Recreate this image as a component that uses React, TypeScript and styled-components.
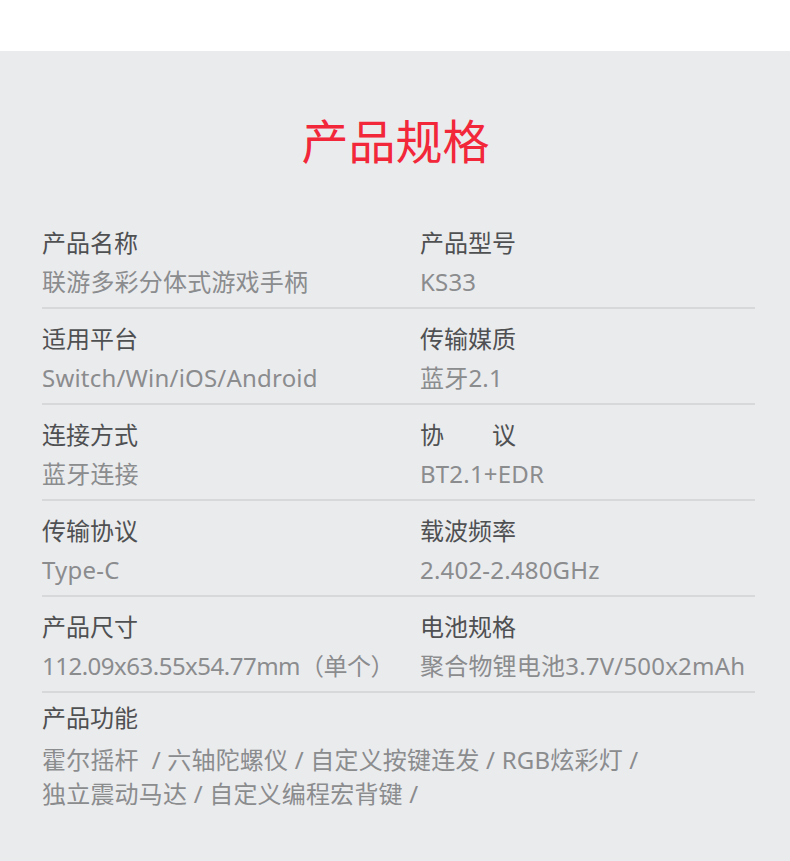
import styled, { createGlobalStyle } from "styled-components";

interface SpecItem {
    label: string;
    value: string;
    tight?: boolean;
}

const specRows: SpecItem[][] = [
    [
        { label: "产品名称", value: "联游多彩分体式游戏手柄" },
        { label: "产品型号", value: "KS33" },
    ],
    [
        { label: "适用平台", value: "Switch/Win/iOS/Android" },
        { label: "传输媒质", value: "蓝牙2.1" },
    ],
    [
        { label: "连接方式", value: "蓝牙连接" },
        { label: "协　　议", value: "BT2.1+EDR" },
    ],
    [
        { label: "传输协议", value: "Type-C" },
        { label: "载波频率", value: "2.402-2.480GHz" },
    ],
    [
        { label: "产品尺寸", value: "112.09x63.55x54.77mm（单个）", tight: true },
        { label: "电池规格", value: "聚合物锂电池3.7V/500x2mAh" },
    ],
];

const features = [
    "霍尔摇杆  / 六轴陀螺仪 / 自定义按键连发 / RGB炫彩灯 /",
    "独立震动马达 / 自定义编程宏背键 /",
];

function App() {
    return (
        <>
            <GlobalStyle />
            <TopBand />
            <Section>
                <Title>产品规格</Title>
                <Table>
                    {specRows.map((row, i) => (
                        <Row key={i}>
                            {row.map((item) => (
                                <Cell key={item.label}>
                                    <Label>{item.label}</Label>
                                    <Value tight={item.tight}>{item.value}</Value>
                                </Cell>
                            ))}
                        </Row>
                    ))}
                    <Row last>
                        <Cell>
                            <Label>产品功能</Label>
                            <Features>
                                {features.map((line) => (
                                    <Value key={line} as="div" wide>
                                        {line}
                                    </Value>
                                ))}
                            </Features>
                        </Cell>
                    </Row>
                </Table>
            </Section>
        </>
    );
}

export default App;

const GlobalStyle = createGlobalStyle`
    html, body {
        margin: 0;
        padding: 0;
        background: #ffffff;
    }
    body {
        font-family: "Noto Sans", "Noto Sans CJK SC", sans-serif;
    }
`;

const TopBand = styled.div`
    height: 51px;
    background: #ffffff;
`;

const Section = styled.section`
    min-height: 810px;
    box-sizing: border-box;
    padding: 64px 35px 40px 42px;
    background: #eaebed;
`;

const Title = styled.h1`
    margin: 0;
    text-align: center;
    font-family: "Noto Sans CJK SC", sans-serif;
    font-size: 47px;
    font-weight: 400;
    line-height: 47px;
    color: #f2273a;
    transform: translateX(-3px);
`;

const Table = styled.div`
    margin-top: 51px;
    display: flex;
    flex-direction: column;
`;

const Row = styled.div<{ last?: boolean }>`
    display: grid;
    grid-template-columns: 378px 1fr;
    padding: ${({ last }) => (last ? "4px 0 0" : "9px 0 5px")};
    border-bottom: ${({ last }) => (last ? "none" : "2px solid #d7d8da")};
`;

const Cell = styled.div`
    display: flex;
    flex-direction: column;
    white-space: nowrap;
`;

const Label = styled.div`
    font-family: "Noto Sans CJK SC", sans-serif;
    font-size: 24px;
    line-height: 40px;
    color: #4f5052;
`;

const Value = styled.span<{ wide?: boolean; tight?: boolean }>`
    display: block;
    font-size: 24px;
    line-height: ${({ wide }) => (wide ? "34px" : "40px")};
    letter-spacing: ${({ tight }) => (tight ? "-0.5px" : "0.2px")};
    color: #8b8c8e;
    white-space: pre;
`;

const Features = styled.div`
    margin-top: 6px;
`;
